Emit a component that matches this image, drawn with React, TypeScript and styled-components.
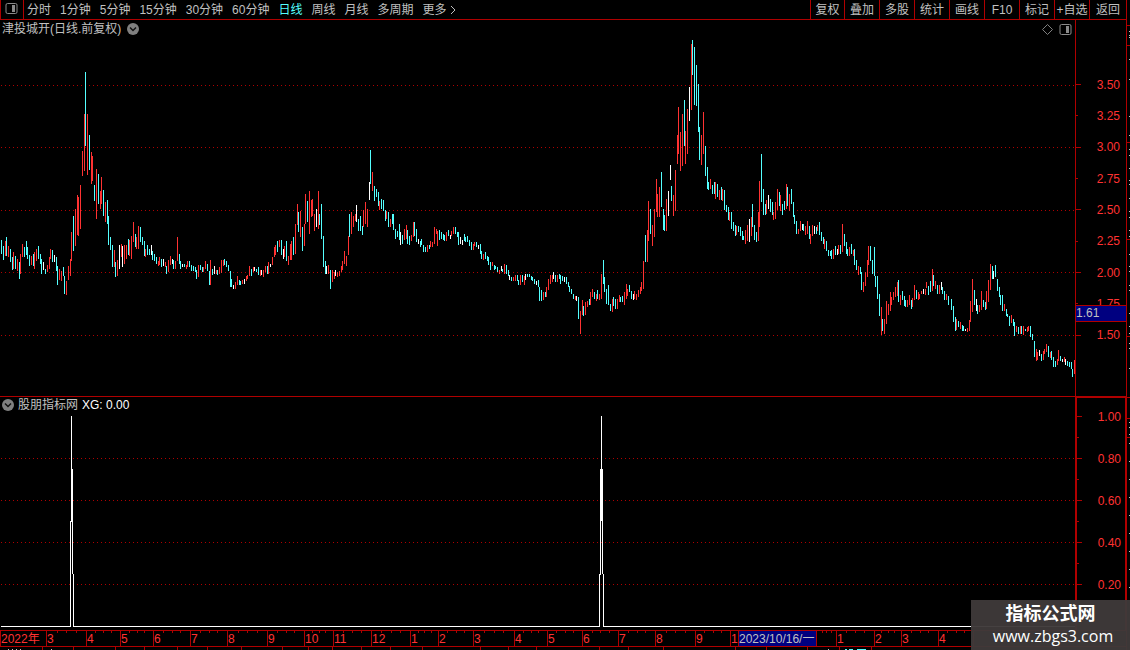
import React from "react";
import styled, { createGlobalStyle, css } from "styled-components";

const line = "#b00000";
const red = "#ff3232";
const cyan = "#54ffff";
const grey = "#c0c0c0";
const navy = "#000080";

const GlobalStyle = createGlobalStyle`
  * { box-sizing: border-box; }
  body {
    margin: 0;
    background: #000;
    color: ${grey};
    font: 12px/18px "Liberation Sans", "Noto Sans CJK SC", sans-serif;
  }
  button { font: inherit; color: inherit; background: none; border: 0; padding: 0; cursor: pointer; white-space: nowrap; }
  svg { display: block; }
`;

const Page = styled.div`
  position: relative;
  display: grid;
  grid-template-columns: minmax(0, 1fr) 4px;
  height: 100vh;
  overflow: hidden;
`;

const Terminal = styled.main`
  display: grid;
  grid-template-rows: 20px minmax(0, 376fr) minmax(0, 234fr) 17px 3px;
  min-width: 0;
`;

const Toolbar = styled.header`
  display: flex;
  border-bottom: 1px solid ${line};
`;

const LayoutButton = styled.button`
  display: flex;
  align-items: center;
  justify-content: center;
  width: 24px;
  padding-right: 2px;
  padding-bottom: 2px;
  border-left: 1px solid ${line};
  border-right: 1px solid ${line};
`;

const Periods = styled.nav`
  display: flex;
  flex: 1;
  gap: 9px;
  padding-left: 3px;
`;

const PeriodButton = styled.button<{ $active?: boolean }>`
  display: flex;
  align-items: center;
  gap: 3px;
  ${(p) => p.$active && css`color: ${cyan};`}
`;

const Tools = styled.div`
  display: flex;
`;

const ToolButton = styled.button`
  width: 35px;
  border-left: 1px solid ${line};
  &:first-child { width: 34px; }
  &:last-child { width: 37px; }
`;

const Panel = styled.section<{ $divided?: boolean }>`
  display: grid;
  grid-template-columns: minmax(0, 1fr) 51px;
  min-height: 0;
  ${(p) => p.$divided && css`border-top: 1px solid ${line};`}
`;

const Plot = styled.div`
  position: relative;
  min-width: 0;
  min-height: 0;
`;

const PlotSvg = styled.svg`
  width: 100%;
  height: 100%;
`;

const PlotHeader = styled.div<{ $compact?: boolean }>`
  position: absolute;
  top: 0;
  left: 0;
  right: 0;
  display: flex;
  align-items: center;
  gap: ${(p) => (p.$compact ? 4 : 6)}px;
  padding: 0 3px 0 2px;
  line-height: ${(p) => (p.$compact ? 16 : 18)}px;
`;

const Title = styled.h2`
  margin: 0;
  font-size: 12px;
  font-weight: 400;
`;

const Reading = styled.span`
  color: #fff;
`;

const Indicators = styled.div`
  display: flex;
  align-items: center;
  gap: 6px;
  margin-left: auto;
`;

const Scale = styled.div<{ $frame?: boolean }>`
  position: relative;
  display: grid;
  grid-auto-rows: minmax(0, 1fr);
  padding: 49px 6px 45px 0;
  border-left: 1px solid ${line};
  color: ${red};
  ${(p) =>
    p.$frame &&
    css`
      padding: 8px 4px 14px 0;
      border: 2px solid ${line};
      border-top-width: 1px;
      border-right-width: 1px;
      border-bottom: 0;
    `}
`;

const ScaleMark = styled.div<{ $minor?: boolean }>`
  display: flex;
  align-items: center;
  justify-content: space-between;
  &::before {
    content: "";
    width: ${(p) => (p.$minor ? 2 : 5)}px;
    height: 1px;
    background: ${line};
  }
`;

const PriceTag = styled.output`
  position: absolute;
  top: 285px;
  left: 0;
  right: 0;
  height: 17px;
  line-height: 15px;
  border: solid ${line};
  border-width: 1px 0;
  background: ${navy};
  color: ${grey};
`;

const TimeAxis = styled.div<{ $spans: number[] }>`
  display: grid;
  grid-template-columns: ${(p) => p.$spans.map((s) => `minmax(0, ${s}fr)`).join(" ")};
  border-top: 1px solid ${line};
  border-bottom: 1px solid ${line};
  color: ${red};
  line-height: 16px;
`;

type MonthKind = "month" | "plain" | "current";

const Month = styled.span<{ $kind: MonthKind }>`
  height: 15px;
  border-left: 1px solid ${line};
  white-space: nowrap;
  ${(p) =>
    p.$kind === "month" &&
    css`
      background: linear-gradient(${line}, ${line}) 25% 0 / 1px 2px no-repeat,
        linear-gradient(${line}, ${line}) 50% 0 / 1px 2px no-repeat,
        linear-gradient(${line}, ${line}) 75% 0 / 1px 2px no-repeat;
    `}
  ${(p) => p.$kind === "current" && css`background: ${navy}; color: ${grey};`}
`;

const SideStrip = styled.aside`
  border-left: 1px solid ${line};
`;

const Watermark = styled.footer`
  position: absolute;
  right: 0;
  bottom: 0;
  width: 159px;
  height: 50px;
  padding-top: 3px;
  background: rgba(62, 57, 57, 0.96);
  color: #fff;
  text-align: center;
`;

const SiteName = styled.strong`
  display: block;
  font-size: 18px;
  line-height: 22px;
`;

const SiteLink = styled.a`
  display: block;
  padding-left: 5px;
  color: inherit;
  font-family: "Open Sans", sans-serif;
  font-size: 16px;
  line-height: 22px;
  text-decoration: none;
`;

/* Daily ranges: colour letter + x, high, low. */
const bars = `
c1 240 254,c3 246 260,r5 241 256,c6 237 256,r8 246 257,c10 249 262,c12 257 270,r13 252 269,c15 256 269,r17 259 271,
c19 262 279,r20 254 274,r22 244 257,c24 247 257,c26 241 255,c27 247 259,c29 255 266,r31 256 265,c33 254 266,r34 252 269,
r36 249 261,c38 246 259,c40 254 264,c41 259 274,w43 262 270,c45 269 274,r47 265 272,r49 257 269,r50 249 259,c52 250 262,
w54 255 262,c56 257 271,c57 266 285,r59 269 280,r61 271 281,c63 267 276,c64 276 294,r66 281 295,r68 266 280,r70 259 276,
r71 232 261,c73 216 251,r75 209 246,r77 195 235,r78 197 236,r80 185 229,r82 151 176,r84 114 171,c85 72 146,r87 114 175,
c89 135 170,r91 152 184,r92 156 181,c94 185 201,r96 169 219,c98 174 204,r100 191 209,r101 177 204,c103 190 216,r105 202 222,
c107 200 224,c108 216 245,c110 237 250,c112 245 267,r114 250 267,c115 262 277,r117 260 276,w119 245 269,r121 244 257,
w122 246 267,r124 245 264,r126 245 259,c128 239 255,r129 240 256,r131 236 259,r133 222 242,c135 234 247,r136 237 249,
r138 226 249,c140 227 242,c142 237 245,c144 241 256,r145 249 257,c147 245 255,c149 249 255,w151 245 255,c152 251 260,
c154 254 261,c156 257 264,r158 261 266,r159 257 265,c161 259 267,w163 259 266,r165 262 267,c166 266 274,r168 260 272,
r170 256 265,w172 259 264,c173 260 269,r175 261 269,r177 237 261,c179 254 264,c180 261 269,w182 264 267,c184 264 267,
r186 265 269,r187 261 267,c189 261 267,c191 265 271,c193 266 271,c195 267 272,c196 270 279,r198 265 277,c200 265 270,
c202 267 272,r203 267 272,r205 261 269,c207 264 271,c209 271 285,r210 260 285,c212 269 275,w214 266 274,r216 270 274,
c217 270 275,r219 267 274,r221 260 273,r223 260 266,c224 259 265,c226 261 267,c228 265 271,c230 271 287,c231 279 287,
w233 285 289,r235 282 289,r237 276 285,c239 280 285,c240 281 285,r242 280 284,w244 279 284,r246 276 281,r247 275 279,
r249 266 276,c251 269 276,r253 267 272,w254 267 271,c256 269 272,c258 267 275,r260 270 276,w261 270 275,r263 270 277,
r265 266 272,c267 266 274,r268 262 274,w270 264 267,r272 257 265,r274 247 257,r275 245 255,c277 241 252,r279 240 247,
c281 240 255,w283 249 259,r284 246 257,c286 241 261,r288 256 265,r290 244 260,r291 241 260,c293 237 255,r295 224 254,
r297 204 225,c298 212 232,r300 211 237,c302 227 251,r304 224 246,r305 194 224,c307 201 222,r309 191 234,r311 200 217,
r312 199 216,r314 214 231,w316 209 227,r318 191 229,c319 214 225,c321 204 239,c323 236 267,c325 261 274,w326 266 274,
r328 265 274,c330 270 289,r332 270 282,r334 272 279,w335 270 276,r337 272 277,r339 271 276,r341 266 272,r342 261 270,
r344 251 264,r346 256 266,r348 236 255,c349 214 237,r351 212 234,r353 216 227,r355 214 221,w356 205 222,c358 219 231,
c360 216 231,c362 226 235,r363 210 227,r365 202 224,r367 209 227,w369 182 200,c370 150 184,r372 172 191,c374 186 201,
c376 189 197,c378 192 206,r379 201 210,c381 199 209,c383 200 211,c385 210 221,r386 211 219,c388 212 227,r390 219 227,
c392 214 224,c393 214 230,c395 229 239,c397 231 237,c399 224 240,w400 232 245,c402 235 244,r404 229 240,r406 225 239,
c407 230 244,c409 236 245,r411 235 241,r413 222 237,c414 222 236,c416 229 242,w418 239 244,c420 241 247,c421 239 245,
c423 245 252,c425 247 252,r427 245 252,c429 245 249,r430 241 247,r432 242 247,r434 227 244,r436 229 234,r437 231 246,
c439 230 240,c441 232 239,c443 234 240,c444 235 241,r446 232 241,c448 230 236,w450 235 239,r451 231 236,r453 227 234,
c455 227 234,c457 232 237,c458 232 245,w460 237 244,w462 240 245,c464 234 241,c465 237 242,c467 236 242,c469 240 246,
c471 242 250,r473 244 250,r474 242 246,c476 242 247,w478 245 249,c480 244 254,c481 251 259,r483 254 260,c485 252 259,
c487 256 261,c488 257 265,c490 262 270,r492 262 266,c494 265 270,c495 266 269,c497 267 272,r499 270 274,w501 266 271,
c502 269 272,r504 264 274,c506 265 274,c508 270 276,w509 275 280,c511 277 281,r513 277 281,r515 275 281,c517 275 281,
c518 280 285,r520 275 285,c522 275 282,r524 276 285,w525 274 280,c527 274 277,c529 274 277,c531 276 280,c532 277 281,
c534 279 284,w536 281 285,c538 280 287,c539 287 301,c541 290 301,r543 292 300,c545 292 297,r546 287 297,r548 279 290,
r550 275 284,r552 275 282,w553 272 279,c555 275 282,r557 275 282,c559 274 279,c560 275 284,c562 276 281,w564 277 282,
c566 277 284,c568 282 287,c569 286 292,c571 289 294,c573 294 299,r575 296 300,w576 296 301,c578 297 319,r580 311 334,
r582 300 315,c583 306 316,r585 302 315,r587 301 307,c589 299 305,r590 292 305,r592 289 297,c594 292 299,r596 294 301,
c597 290 299,r599 294 300,r601 274 299,c603 260 284,c604 277 292,c606 289 304,c608 285 305,c610 304 311,r612 299 312,
c613 297 306,c615 299 309,r617 299 309,r619 295 302,c620 297 302,c622 296 302,r624 292 305,r626 284 299,r627 289 296,
c629 285 292,c631 291 299,w633 294 300,r634 291 299,r636 294 300,r638 290 297,r640 287 294,r641 282 291,r643 261 289,
c645 235 262,r647 230 262,r648 201 241,c650 209 234,r652 225 246,r654 209 237,r656 179 212,r657 194 217,r659 187 217,
c661 172 207,c663 209 230,c664 215 231,r666 199 231,w668 191 216,w670 165 180,c671 186 201,r673 195 216,r675 170 211,
r677 135 164,r678 107 154,r680 132 171,r682 114 166,c684 100 146,r685 131 164,r687 109 154,w689 87 121,r691 44 110,
c692 40 75,c694 47 105,c696 65 106,c698 84 132,c699 127 160,r701 135 165,r703 112 154,c705 146 176,c707 167 189,
c708 182 190,r710 179 189,c712 185 194,c714 182 194,r715 182 199,c717 184 197,r719 190 200,c721 187 200,r722 189 201,
c724 190 210,c726 205 212,c728 207 220,r729 212 221,c731 212 229,c733 222 231,c735 225 236,r736 226 235,c738 226 232,
c740 227 236,c742 231 240,c743 236 240,r745 230 244,r747 225 241,w749 219 242,r751 217 236,c752 204 227,c754 225 240,
c756 232 242,r758 212 241,r759 181 227,c761 154 202,c763 189 215,c765 204 215,r766 200 214,w768 195 209,c770 199 212,
c772 202 215,r773 212 220,r775 202 219,r777 189 210,c779 192 206,r780 195 211,c782 204 215,c784 201 210,r786 184 209,
c787 187 206,r789 194 211,c791 189 204,c793 202 217,c794 215 224,c796 221 234,r798 229 234,r800 221 231,w802 224 230,
c803 224 231,r805 226 235,r807 221 234,c809 226 239,r810 234 244,r812 225 236,w814 226 234,c816 227 234,r817 225 231,
c819 222 235,c821 232 241,c823 237 244,r824 239 249,c826 241 251,c828 250 256,c830 251 256,c831 250 259,r833 249 259,
c835 246 255,w837 249 255,r838 245 254,c840 245 254,r842 224 252,c844 234 246,c846 242 254,c847 249 256,r849 247 256,
c851 244 254,r853 250 256,c854 249 265,c856 260 270,r858 266 275,c860 267 274,c861 272 290,r863 282 292,r865 272 286,
r867 260 277,r868 246 265,c870 246 261,c872 260 274,c874 247 276,c875 276 287,c877 276 299,c879 294 316,r881 307 335,
c882 319 331,r884 319 334,r886 301 324,r888 304 315,r890 292 311,r891 297 305,r893 292 300,r895 287 297,r897 282 296,
c898 280 302,r900 295 305,c902 291 300,c904 296 306,c905 300 307,r907 300 307,r909 295 305,c911 300 309,r912 298 307,
r914 285 300,c916 290 299,r918 292 300,r919 294 299,r921 291 294,w923 289 294,r925 289 295,r926 282 288,c928 286 295,
c930 281 292,r932 269 291,c933 275 286,r935 281 289,c937 285 294,r939 285 294,w941 282 290,c942 287 294,c944 291 300,
r946 294 300,c948 296 305,c951 299 310,c953 306 322,c955 317 331,r956 319 330,c958 321 327,r960 322 329,c962 325 331,
c963 326 331,w965 329 331,r967 328 332,r969 320 331,r970 301 322,r972 279 312,c974 290 305,w976 299 311,c977 305 314,
r979 305 312,r981 291 310,c983 300 307,c985 302 310,r986 291 309,r988 280 302,r990 264 290,c992 266 279,w993 271 279,
c995 265 277,c997 279 291,c999 287 297,c1000 295 305,c1002 295 311,r1004 304 311,c1006 309 316,c1007 314 317,
c1009 316 326,r1011 315 323,c1013 319 326,c1014 322 336,r1016 326 332,c1018 327 334,r1020 326 334,c1021 326 334,
r1023 326 335,c1025 329 331,r1027 327 332,r1028 326 331,c1030 326 337,c1032 334 340,c1034 341 357,r1036 349 361,
r1037 352 360,w1039 350 356,c1041 354 361,r1043 351 360,r1044 349 354,r1046 344 352,c1048 346 357,r1050 352 358,
c1051 351 360,c1053 357 367,c1055 361 367,r1057 359 365,r1058 350 361,c1060 356 361,w1062 359 362,r1064 357 362,
w1065 359 365,c1067 361 366,c1069 362 367,c1071 362 369,c1072 369 377,r1074 360 374`;

const strokes: Record<string, string> = { r: red, c: cyan, w: "#fff" };
const rangePaths: Record<string, string> = { r: "", c: "", w: "" };
bars
  .trim()
  .split(/,\s*/)
  .forEach((bar) => {
    const [x, high, low] = bar.slice(1).split(" ");
    rangePaths[bar[0]] += `M${x}.5 ${high}V${low}`;
  });

const periods = ["分时", "1分钟", "5分钟", "15分钟", "30分钟", "60分钟", "日线", "周线", "月线", "多周期"];
const tools = ["复权", "叠加", "多股", "统计", "画线", "F10", "标记", "+自选", "返回"];
const prices = ["3.50", "3.25", "3.00", "2.75", "2.50", "2.25", "2.00", "1.75", "1.50"];
const levels = ["1.00", "", "0.80", "", "0.60", "", "0.40", "", "0.20", ""];
const months: [string, number, MonthKind?][] = [
  ["2022年", 46, "plain"],
  ["3", 40], ["4", 34], ["5", 33], ["6", 37], ["7", 37], ["8", 40], ["9", 37], ["10", 29], ["11", 38], ["12", 39],
  ["1", 28], ["2", 35], ["3", 41], ["4", 33], ["5", 35], ["6", 36], ["7", 37], ["8", 40], ["9", 35],
  ["1", 8, "plain"],
  ["2023/10/16/一", 78, "current"],
  ["", 20], ["1", 38], ["2", 27], ["3", 37], ["4", 35], ["", 153, "plain"],
];
const stripDividers = [
  42, 73, 115, 144, 177, 207, 241, 282, 308, 332, 361, 390, 422, 480, 508, 536, 599, 628, 663, 735, 766, 807, 839, 871,
];
const sideTicks = [25, 45, 142, 239, 336, 397, 418, 437];
const sideDots = [
  31, 35, 37, 59, 79, 116, 135, 149, 155, 168, 180, 184, 198, 211, 217, 230, 236, 254, 266, 271, 285, 290, 313, 326,
  333, 343, 348, 368, 422, 427, 434, 443, 461, 479, 497, 515, 533, 551, 569, 587,
];

const PanelIcon = () => (
  <svg width="13" height="11" aria-hidden="true">
    <rect x="1" y="0.5" width="11" height="10" rx="1.5" fill="none" stroke="#8a8a8a" />
    <rect x="7" y="2" width="3" height="7" fill="#8a8a8a" />
  </svg>
);

const ChevronBadge = () => (
  <svg width="12" height="12" aria-hidden="true">
    <circle cx="6" cy="6" r="6" fill="#808080" />
    <path d="M3 4.5 6 7.5 9 4.5" fill="none" stroke="#111" strokeWidth="1.5" />
  </svg>
);

const GridLine = ({ y }: { y: number }) => (
  <path d={`M1 ${y}.5H1075`} stroke={line} strokeDasharray="1 3" />
);

export default function App() {
  return (
    <Page>
      <GlobalStyle />
      <Terminal>
        <Toolbar>
          <LayoutButton aria-label="布局">
            <PanelIcon />
          </LayoutButton>
          <Periods>
            {periods.map((p) => (
              <PeriodButton key={p} $active={p === "日线"}>{p}</PeriodButton>
            ))}
            <PeriodButton>
              更多
              <svg width="6" height="10" aria-hidden="true">
                <path d="M1 1 5 5 1 9" fill="none" stroke={grey} />
              </svg>
            </PeriodButton>
          </Periods>
          <Tools>
            {tools.map((t) => (
              <ToolButton key={t}>{t}</ToolButton>
            ))}
          </Tools>
        </Toolbar>

        <Panel>
          <Plot>
            <PlotSvg viewBox="0 20 1075 376" preserveAspectRatio="none" shapeRendering="crispEdges">
              {[85, 147, 210, 272, 335].map((y) => <GridLine key={y} y={y} />)}
              {["r", "c", "w"].map((k) => (
                <path key={k} d={rangePaths[k]} stroke={strokes[k]} fill="none" />
              ))}
            </PlotSvg>
            <PlotHeader>
              <Title>津投城开(日线.前复权)</Title>
              <button aria-label="展开"><ChevronBadge /></button>
              <Indicators>
                <svg width="11" height="11" aria-hidden="true">
                  <path d="M5.5 .5 10.5 5.5 5.5 10.5 .5 5.5Z" fill="none" stroke="#808080" />
                </svg>
                <PanelIcon />
              </Indicators>
            </PlotHeader>
          </Plot>
          <Scale>
            {prices.map((p, i) => (
              <ScaleMark key={p} $minor={i % 2 === 1}>{p}</ScaleMark>
            ))}
            <PriceTag>1.61</PriceTag>
          </Scale>
        </Panel>

        <Panel $divided>
          <Plot>
            <PlotSvg viewBox="0 397 1075 233" preserveAspectRatio="none" shapeRendering="crispEdges">
              {[458, 500, 542, 584].map((y) => <GridLine key={y} y={y} />)}
              <path
                d="M1 626.5H70.5V521H71.5V416M72.5 469V574M73.5 574V626.5H599.5V574H600.5V469M601.5 416V521M602.5 469V574M603.5 574V626.5H1075"
                fill="none"
                stroke="#fff"
              />
            </PlotSvg>
            <PlotHeader $compact>
              <button aria-label="指标菜单"><ChevronBadge /></button>
              <Title>股朋指标网</Title>
              <Reading>XG: 0.00</Reading>
            </PlotHeader>
          </Plot>
          <Scale $frame>
            {levels.map((v, i) => (
              <ScaleMark key={i} $minor={v === ""}>{v}</ScaleMark>
            ))}
          </Scale>
        </Panel>

        <TimeAxis $spans={months.map(([, span]) => span)}>
          {months.map(([label, , kind = "month"], i) => (
            <Month key={i} $kind={kind}>{label}</Month>
          ))}
        </TimeAxis>

        <svg width="100%" height="3" viewBox="0 0 1126 3" preserveAspectRatio="none" shapeRendering="crispEdges">
          {stripDividers.map((x) => <path key={x} d={`M${x}.5 0V3`} stroke={line} />)}
          <path d="M8 2.5H9M12 2.5H13M16 2.5H17M20 2.5H21M51 2.5H52M828 2.5H829" stroke={grey} />
          <path d="M845 2.5H847M849 2.5H853M857 2.5H866" stroke={cyan} />
        </svg>
      </Terminal>

      <SideStrip>
        <svg width="3" height="100%" viewBox="0 0 3 650" preserveAspectRatio="none" shapeRendering="crispEdges">
          {sideTicks.map((y) => <path key={y} d={`M0 ${y}.5H3`} stroke={line} />)}
          {sideDots.map((y) => <path key={y} d={`M2 ${y}.5H3`} stroke={grey} />)}
        </svg>
      </SideStrip>

      <Watermark>
        <SiteName>指标公式网</SiteName>
        <SiteLink href="#">www.zbgs3.com</SiteLink>
      </Watermark>
    </Page>
  );
}
